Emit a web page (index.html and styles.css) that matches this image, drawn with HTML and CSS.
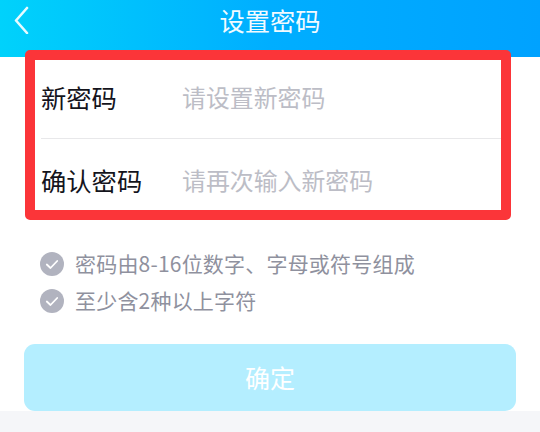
FILE: index.html
```html
<!DOCTYPE html>
<html lang="zh-CN">
<head>
<meta charset="utf-8">
<title>设置密码</title>
<link rel="stylesheet" href="styles.css">
</head>
<body>
<div class="page">
  <header class="topbar">
    <svg class="back" width="16" height="28" viewBox="0 0 16 28"><path d="M14 2 L3 14.500 L14 27" fill="none" stroke="#fff" stroke-width="2.600" stroke-linecap="round" stroke-linejoin="round" opacity=".9"/></svg>
    <h1 class="title">设置密码</h1>
  </header>
  <main class="content">
    <section class="form">
      <div class="row row-first">
        <span class="label">新密码</span>
        <span class="placeholder">请设置新密码</span>
      </div>
      <div class="divider"></div>
      <div class="row row-second">
        <span class="label">确认密码</span>
        <span class="placeholder">请再次输入新密码</span>
      </div>
    </section>
    <ul class="rules">
      <li class="rule">
        <svg class="check" width="24" height="24" viewBox="0 0 24 24"><circle cx="12" cy="12" r="12" fill="#b1b3bf"/><path d="M6.800 12.500 L10.500 16 L17.200 9" fill="none" stroke="#fff" stroke-width="1.800" stroke-linecap="round" stroke-linejoin="round"/></svg>
        <span class="rule-text">密码由8-16位数字、字母或符号组成</span>
      </li>
      <li class="rule">
        <svg class="check" width="24" height="24" viewBox="0 0 24 24"><circle cx="12" cy="12" r="12" fill="#b1b3bf"/><path d="M6.800 12.500 L10.500 16 L17.200 9" fill="none" stroke="#fff" stroke-width="1.800" stroke-linecap="round" stroke-linejoin="round"/></svg>
        <span class="rule-text">至少含2种以上字符</span>
      </li>
    </ul>
    <button class="confirm" type="button">确定</button>
  </main>
  <div class="footer"></div>
</div>
</body>
</html>
```

FILE: styles.css
```css
* { box-sizing: border-box; margin: 0; padding: 0; }
html, body { width: 540px; height: 432px; overflow: hidden; background: #fff; }
body { font-family: "Noto Sans CJK SC", "Noto Sans", sans-serif; }
.page { width: 540px; height: 432px; display: flex; flex-direction: column; position: relative; }
.topbar {
  height: 57px;
  flex: none;
  background: linear-gradient(90deg, #00d2fb 0%, #00aeff 50%, #00a2ff 100%);
  display: flex;
  align-items: flex-start;
  justify-content: center;
  position: relative;
}
.back { position: absolute; left: 13px; top: 6px; }
.title { font-size: 25.300px; font-weight: 400; color: #fff; line-height: 40px; opacity: .95; }
.content { flex: 1; display: flex; flex-direction: column; padding: 0 24px; min-height: 0; margin-top: -7px; position: relative; }
.form {
  width: 486px;
  height: 170px;
  border: 10px solid #fb3539;
  border-radius: 5px;
  background: #fff;
  display: flex;
  flex-direction: column;
  margin-left: 1px;
}
.row { display: flex; align-items: center; padding-left: 6px; }
.row-first { height: 78px; padding-bottom: 5px; }
.row-second { height: 71px; padding-top: 10px; }
.divider { height: 1px; background: #e8e8ea; margin-left: 6px; }
.label { width: 141px; font-size: 25.300px; color: #14141c; line-height: 36px; }
.placeholder { font-size: 23.900px; color: #bcbdc6; line-height: 34px; }
.rules { list-style: none; margin-top: 32px; padding-left: 16px; display: flex; flex-direction: column; gap: 13px; }
.rule { display: flex; align-items: center; gap: 11px; height: 24px; font-size: 21px; letter-spacing: .2px; color: #8f919e; }
.rule-text { line-height: 24px; padding-bottom: 3px; }
.check { flex: none; }
.confirm {
  margin-top: 31px;
  height: 67px;
  width: 492px;
  border: 0;
  border-radius: 11px;
  background: #b4eeff;
  color: #fff;
  font-family: inherit;
  font-size: 25px;
  padding-bottom: 2px;
  flex: none;
  position: relative;
  z-index: 1;
}
.footer { position: absolute; left: 0; right: 0; bottom: 0; height: 21px; background: #f5f6f9; }
```
